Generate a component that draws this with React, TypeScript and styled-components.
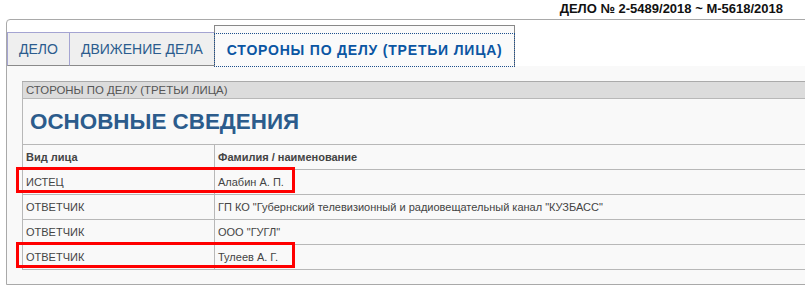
import styled, { createGlobalStyle } from 'styled-components';

type Party = {
  kind: string;
  name: string;
  marked?: boolean;
};

const parties: Party[] = [
  { kind: 'ИСТЕЦ', name: 'Алабин А. П.', marked: true },
  {
    kind: 'ОТВЕТЧИК',
    name: 'ГП КО "Губернский телевизионный и радиовещательный канал "КУЗБАСС"',
  },
  { kind: 'ОТВЕТЧИК', name: 'ООО "ГУГЛ"' },
  { kind: 'ОТВЕТЧИК', name: 'Тулеев А. Г.', marked: true },
];

const tabs = ['ДЕЛО', 'ДВИЖЕНИЕ ДЕЛА'];

// offsets of the red annotation boxes, from the top of the table
const ROW_TOP = 88;
const ROW_HEIGHT = 25;

export default function App() {
  return (
    <Page>
      <GlobalStyle />

      <CaseTitle>ДЕЛО № 2-5489/2018 ~ М-5618/2018</CaseTitle>

      <Panel>
        <TabBar>
          {tabs.map((tab) => (
            <Tab key={tab}>{tab}</Tab>
          ))}

          <ActiveTab>
            <ActiveTabLink>СТОРОНЫ ПО ДЕЛУ (ТРЕТЬИ ЛИЦА)</ActiveTabLink>
          </ActiveTab>
        </TabBar>

        <TabContent>
          <TableWrap>
            <PartiesTable>
              <colgroup>
                <col style={{ width: 192 }} />
                <col />
              </colgroup>
              <tbody>
                <tr>
                  <CaptionCell colSpan={2}>СТОРОНЫ ПО ДЕЛУ (ТРЕТЬИ ЛИЦА)</CaptionCell>
                </tr>
                <tr>
                  <HeadingCell colSpan={2}>ОСНОВНЫЕ СВЕДЕНИЯ</HeadingCell>
                </tr>
                <tr>
                  <HeaderCell>Вид лица</HeaderCell>
                  <HeaderCell>Фамилия / наименование</HeaderCell>
                </tr>
                {parties.map((party, index) => (
                  <tr key={index}>
                    <Cell>{party.kind}</Cell>
                    <Cell>{party.name}</Cell>
                  </tr>
                ))}
              </tbody>
            </PartiesTable>

            {parties.map((party, index) =>
              party.marked ? (
                <Highlight
                  key={index}
                  style={{ top: ROW_TOP + index * ROW_HEIGHT - 2 }}
                />
              ) : null,
            )}
          </TableWrap>
        </TabContent>
      </Panel>
    </Page>
  );
}

const GlobalStyle = createGlobalStyle`
  html, body {
    margin: 0;
    padding: 0;
    background: #fff;
  }

  body {
    font-family: 'Liberation Sans', Arial, sans-serif;
  }
`;

const Page = styled.div`
  width: 805px;
  overflow: hidden;
  padding-left: 6px;
  box-sizing: border-box;
`;

const CaseTitle = styled.div`
  width: 777px;
  height: 19px;
  line-height: 18px;
  text-align: right;
  font-size: 13px;
  font-weight: bold;
  color: #111;
`;

const Panel = styled.div`
  width: 840px;
  border: 1px solid #a9a9a9;
  border-radius: 4px 0 0 0;
  background: #fff;
`;

const TabBar = styled.div`
  display: flex;
  align-items: flex-end;
  padding-top: 5px;
  height: 41px;
`;

const Tab = styled.div`
  height: 32px;
  display: flex;
  align-items: center;
  padding: 0 11px;
  background: #efefef;
  border-top: 1px solid #a4a4d2;
  border-left: 1px solid #a4a4d2;
  border-bottom: 1px solid #8a8a8a;
  font-size: 14px;
  color: #2b5c8e;
  white-space: nowrap;
`;

const ActiveTab = styled.div`
  position: relative;
  z-index: 1;
  box-sizing: border-box;
  width: 301px;
  height: 42px;
  margin-bottom: -1px;
  border: 1px solid #888;
  border-bottom: none;
  background: #fafafa;
`;

const ActiveTabLink = styled.div`
  box-sizing: border-box;
  height: 34px;
  margin: 7px -1px 0;
  padding-left: 12px;
  display: flex;
  align-items: center;
  border: 1px dotted #1d4f8c;
  font-size: 14px;
  font-weight: bold;
  letter-spacing: 0.8px;
  color: #0b56a3;
  white-space: nowrap;
`;

const TabContent = styled.div`
  background: #f9f9f9;
  padding: 15px 0 14px 15px;
`;

const TableWrap = styled.div`
  position: relative;
`;

const PartiesTable = styled.table`
  width: 100%;
  border-collapse: collapse;
  table-layout: fixed;

  td {
    border: 1px solid #b8b8b8;
  }
`;

const CaptionCell = styled.td`
  height: 16px;
  padding: 0 3px;
  background: #dcdcdc;
  border-top-color: #aaa !important;
  font-size: 11.4px;
  color: #555;
  vertical-align: middle;
`;

const HeadingCell = styled.td`
  height: 45px;
  padding: 0 7px;
  font-size: 22.4px;
  font-weight: bold;
  color: #2c5c8c;
  vertical-align: middle;
`;

const HeaderCell = styled.td`
  height: 24px;
  padding: 0 3px;
  font-size: 11px;
  font-weight: bold;
  color: #444;
  vertical-align: middle;
  white-space: nowrap;
`;

const Cell = styled.td`
  height: 24px;
  padding: 0 3px;
  font-size: 11px;
  color: #444;
  vertical-align: middle;
  white-space: nowrap;
`;

const Highlight = styled.div`
  position: absolute;
  left: -6px;
  width: 279px;
  height: 26px;
  box-sizing: border-box;
  border: 3px solid #f00;
  pointer-events: none;
`;
